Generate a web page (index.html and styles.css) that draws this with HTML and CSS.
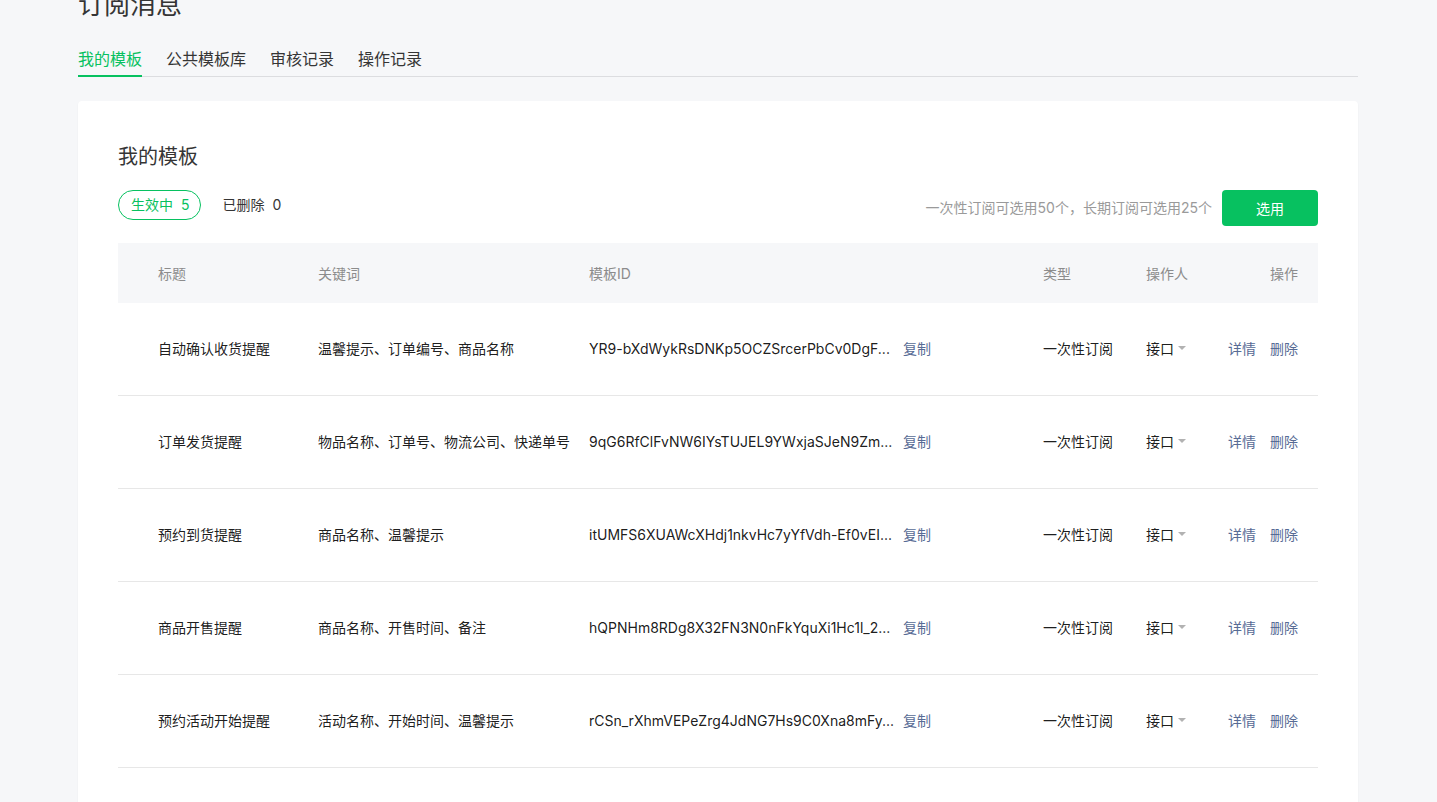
FILE: index.html
```html
<!DOCTYPE html>
<html lang="zh-CN">
<head>
<meta charset="utf-8">
<title>订阅消息</title>
<link rel="stylesheet" href="styles.css">
</head>
<body>
<div class="page">
  <h1 class="page-title">订阅消息</h1>
  <nav class="tabs">
    <a class="tab active">我的模板</a>
    <a class="tab">公共模板库</a>
    <a class="tab">审核记录</a>
    <a class="tab">操作记录</a>
  </nav>
  <section class="card">
    <h2 class="card-title">我的模板</h2>
    <div class="toolbar">
      <div class="filters">
        <span class="pill active">生效中<span class="num">5</span></span>
        <span class="pill">已删除<span class="num">0</span></span>
      </div>
      <div class="actions">
        <span class="hint">一次性订阅可选用50个，长期订阅可选用25个</span>
        <button class="btn-primary">选用</button>
      </div>
    </div>
    <div class="table">
      <div class="row head">
        <div class="c c-title">标题</div>
        <div class="c">关键词</div>
        <div class="c">模板ID</div>
        <div class="c">类型</div>
        <div class="c">操作人</div>
        <div class="c c-ops">操作</div>
      </div>
      <div class="row">
        <div class="c c-title">自动确认收货提醒</div>
        <div class="c">温馨提示、订单编号、商品名称</div>
        <div class="c"><span class="tid">YR9-bXdWykRsDNKp5OCZSrcerPbCv0DgF...</span><a class="link">复制</a></div>
        <div class="c">一次性订阅</div>
        <div class="c"><span class="op">接口<i class="caret"></i></span></div>
        <div class="c c-ops"><a class="link">详情</a><a class="link">删除</a></div>
      </div>
      <div class="row">
        <div class="c c-title">订单发货提醒</div>
        <div class="c">物品名称、订单号、物流公司、快递单号</div>
        <div class="c"><span class="tid">9qG6RfClFvNW6IYsTUJEL9YWxjaSJeN9Zm...</span><a class="link">复制</a></div>
        <div class="c">一次性订阅</div>
        <div class="c"><span class="op">接口<i class="caret"></i></span></div>
        <div class="c c-ops"><a class="link">详情</a><a class="link">删除</a></div>
      </div>
      <div class="row">
        <div class="c c-title">预约到货提醒</div>
        <div class="c">商品名称、温馨提示</div>
        <div class="c"><span class="tid">itUMFS6XUAWcXHdj1nkvHc7yYfVdh-Ef0vEI...</span><a class="link">复制</a></div>
        <div class="c">一次性订阅</div>
        <div class="c"><span class="op">接口<i class="caret"></i></span></div>
        <div class="c c-ops"><a class="link">详情</a><a class="link">删除</a></div>
      </div>
      <div class="row">
        <div class="c c-title">商品开售提醒</div>
        <div class="c">商品名称、开售时间、备注</div>
        <div class="c"><span class="tid">hQPNHm8RDg8X32FN3N0nFkYquXi1Hc1l_2...</span><a class="link">复制</a></div>
        <div class="c">一次性订阅</div>
        <div class="c"><span class="op">接口<i class="caret"></i></span></div>
        <div class="c c-ops"><a class="link">详情</a><a class="link">删除</a></div>
      </div>
      <div class="row">
        <div class="c c-title">预约活动开始提醒</div>
        <div class="c">活动名称、开始时间、温馨提示</div>
        <div class="c"><span class="tid">rCSn_rXhmVEPeZrg4JdNG7Hs9C0Xna8mFy...</span><a class="link">复制</a></div>
        <div class="c">一次性订阅</div>
        <div class="c"><span class="op">接口<i class="caret"></i></span></div>
        <div class="c c-ops"><a class="link">详情</a><a class="link">删除</a></div>
      </div>
    </div>
  </section>
</div>
</body>
</html>
```

FILE: styles.css
```css
* { box-sizing: border-box; }
html, body {
  margin: 0;
  padding: 0;
  background: #f6f7f9;
  font-family: "Inter", "Noto Sans CJK SC", sans-serif;
  color: rgba(0, 0, 0, 0.9);
  overflow: hidden;
}
.page {
  width: 1280px;
  margin-left: 78px;
}
.page-title {
  margin: -8px 0 0;
  font-size: 26px;
  line-height: 26px;
  font-weight: 400;
  color: #353535;
}
.tabs {
  display: flex;
  gap: 24px;
  margin-top: 29px;
  border-bottom: 1px solid #dcdde0;
}
.tab {
  font-size: 16px;
  line-height: 24px;
  padding-bottom: 4px;
  border-bottom: 2px solid transparent;
  margin-bottom: -1px;
  color: #353535;
  cursor: pointer;
}
.tab.active {
  color: #07c160;
  border-bottom-color: #07c160;
}
.card {
  margin-top: 24px;
  background: #fff;
  border-radius: 4px;
  box-shadow: 0 1px 2px rgba(0, 0, 0, 0.05);
  padding: 40px 40px 60px;
}
.card-title {
  margin: 0;
  font-size: 20px;
  line-height: 32px;
  font-weight: 400;
  color: #353535;
}
.toolbar {
  margin-top: 17px;
  display: flex;
  justify-content: space-between;
  align-items: flex-start;
}
.filters {
  display: flex;
  gap: 9px;
}
.pill {
  height: 30px;
  line-height: 28px;
  padding: 0 10px 0 12px;
  border: 1px solid transparent;
  border-radius: 15px;
  font-size: 14px;
  color: #353535;
  white-space: nowrap;
}
.pill .num {
  margin-left: 8px;
}
.pill.active {
  border-color: #07c160;
  color: #07c160;
}
.actions {
  display: flex;
  align-items: center;
  gap: 10px;
}
.hint {
  font-size: 14px;
  color: #9a9a9a;
  line-height: 36px;
}
.btn-primary {
  width: 96px;
  height: 36px;
  border: 0;
  border-radius: 4px;
  background: #07c160;
  color: #fff;
  font-family: inherit;
  font-size: 14px;
  cursor: pointer;
}
.table {
  margin-top: 17px;
}
.row {
  display: grid;
  grid-template-columns: 200px 271px 454px 103px 82px 90px;
  align-items: center;
  height: 93px;
  padding-bottom: 2px;
  border-bottom: 1px solid #e7e7e7;
  font-size: 14px;
}
.row.head {
  height: 60px;
  padding-bottom: 0;
  background: #f6f7f9;
  border-bottom: 0;
  color: #8c8c8c;
}
.c {
  white-space: nowrap;
  display: flex;
  align-items: center;
}
.c-title {
  padding-left: 40px;
}
.c-ops {
  justify-content: flex-end;
  padding-right: 20px;
  gap: 14px;
}
.tid {
  display: inline-block;
  width: 314px;
  overflow: hidden;
  white-space: nowrap;
}
.link {
  color: #576b95;
  cursor: pointer;
}
.op {
  display: inline-flex;
  align-items: center;
}
.caret {
  display: inline-block;
  width: 0;
  height: 0;
  margin-left: 4px;
  border-left: 4px solid transparent;
  border-right: 4px solid transparent;
  border-top: 4px solid #b2b2b2;
}
```
